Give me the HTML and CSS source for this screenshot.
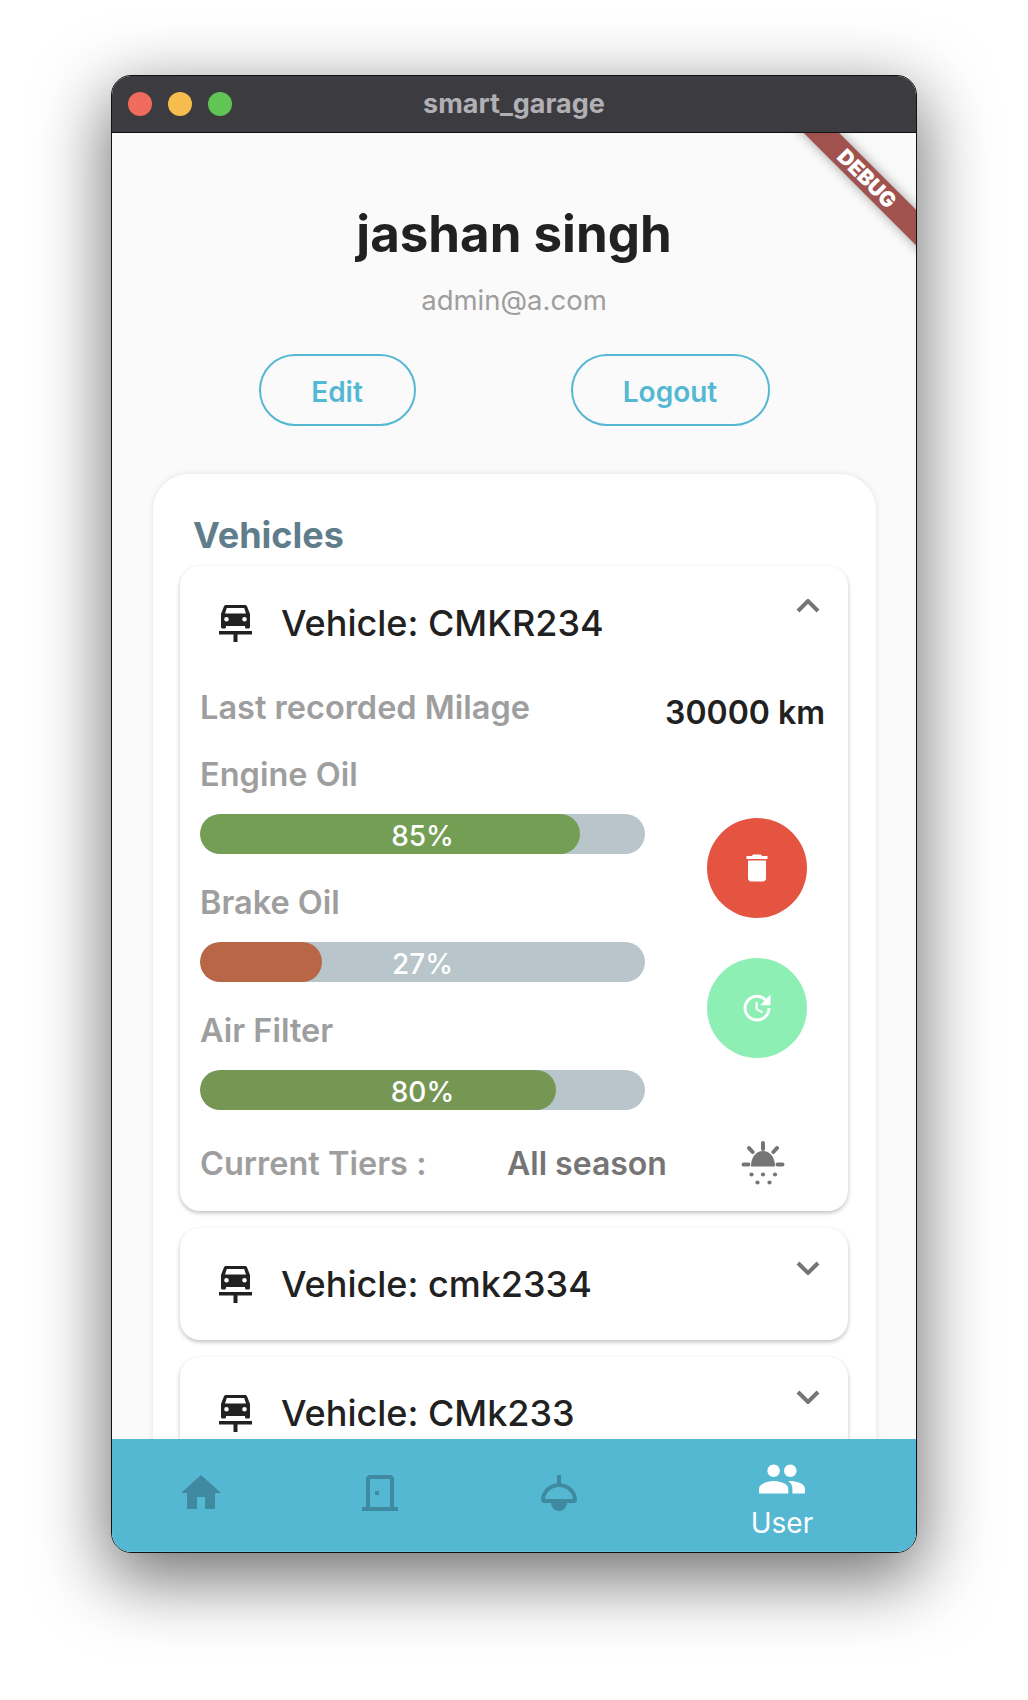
FILE: index.html
```html
<!DOCTYPE html>
<html lang="en">
  <head>
    <meta charset="UTF-8" />
    <title>smart_garage</title>
    <link rel="stylesheet" href="styles.css">
  </head>
  <body>
    <div class="window">
      <div class="titlebar">
        <div class="lights">
          <span class="light red"></span>
          <span class="light yellow"></span>
          <span class="light green"></span>
        </div>
        <div class="window-title">smart_garage</div>
      </div>

      <div class="screen">
        <div class="debug-banner">DEBUG</div>

        <div class="profile">
          <h1 class="user-name">jashan singh</h1>
          <p class="user-mail">admin@a.com</p>
          <div class="profile-actions">
            <button class="outline-btn edit-btn">Edit</button>
            <button class="outline-btn logout-btn">Logout</button>
          </div>
        </div>

        <div class="panel">
          <h2 class="panel-title">Vehicles</h2>

          <div class="vehicle-card open">
            <div class="vehicle-head">
              <svg class="car-icon" viewBox="0 0 33 38"><path d="M7 1h19c1 0 1.800.6 2.100 1.500L31 10v13c0 .8-.6 1.500-1.500 1.500h-2c-.8 0-1.500-.6-1.500-1.500v-1H7v1c0 .8-.6 1.500-1.500 1.500h-2C2.600 24.500 2 23.800 2 23V10l2.900-7.500C5.200 1.600 6 1 7 1zm.8 3L6 9.500h21L25.200 4H7.800zM7.500 13a2.300 2.300 0 1 0 0 4.600 2.300 2.300 0 0 0 0-4.600zm18 0a2.300 2.300 0 1 0 0 4.600 2.300 2.300 0 0 0 0-4.600zM0 27h33v3.500H18.500V38h-4v-7.500H0z"/></svg>
              <span class="vehicle-name">Vehicle: CMKR234</span>
              <svg class="chevron" viewBox="0 0 24 14"><path d="M2 12 12 2l10 10"/></svg>
            </div>

            <div class="vehicle-body">
              <div class="milage-row">
                <span class="muted-label">Last recorded Milage</span>
                <span class="milage-value">30000 km</span>
              </div>

              <div class="parts-row">
                <div class="parts">
                  <div class="muted-label part-label">Engine Oil</div>
                  <div class="bar">
                    <div class="bar-fill good" style="width: 85.4%"></div>
                    <span class="bar-text">85%</span>
                  </div>
                  <div class="muted-label part-label">Brake Oil</div>
                  <div class="bar">
                    <div class="bar-fill bad" style="width: 27.5%"></div>
                    <span class="bar-text">27%</span>
                  </div>
                  <div class="muted-label part-label">Air Filter</div>
                  <div class="bar">
                    <div class="bar-fill fair" style="width: 80%"></div>
                    <span class="bar-text">80%</span>
                  </div>
                </div>

                <div class="round-actions">
                  <button class="round-btn delete-btn">
                    <svg viewBox="0 0 24 24"><path d="M6 19c0 1.100.9 2 2 2h8c1.100 0 2-.9 2-2V7H6v12zM19 4h-3.500l-1-1h-5l-1 1H5v2h14V4z"/></svg>
                  </button>
                  <button class="round-btn refresh-btn">
                    <svg viewBox="0 0 24 24"><path d="M21 10.120h-6.780l2.740-2.820c-2.730-2.700-7.150-2.800-9.880-.1-2.730 2.710-2.730 7.080 0 9.790s7.150 2.710 9.880 0C18.320 15.650 19 14.080 19 12.100h2c0 1.980-.88 4.550-2.640 6.290-3.510 3.480-9.210 3.480-12.720 0-3.500-3.470-3.530-9.110-.02-12.580s9.140-3.470 12.650 0L21 3v7.120zM12.500 8v4.250l3.500 2.080-.72 1.210L11 13V8h1.500z"/></svg>
                  </button>
                </div>
              </div>

              <div class="tires-row">
                <span class="muted-label">Current Tiers :</span>
                <span class="tires-value">All season</span>
                <svg class="tires-icon" viewBox="0 0 46 44">
                  <path class="sun-dome" d="M10 25.500C10 16 15 10 22 10s12 6 12 15.500z"/>
                  <path class="sun-rays" d="M22 2v6M8 7l3.600 4M36 7l-3.600 4M2.500 23.500h5M36.500 23.500h5"/>
                  <circle cx="10.500" cy="33.500" r="2.100"/><circle cx="22" cy="33.500" r="2.100"/><circle cx="34" cy="33.500" r="2.100"/>
                  <circle cx="16.500" cy="41.500" r="2.100"/><circle cx="28.500" cy="41.500" r="2.100"/>
                </svg>
              </div>
            </div>
          </div>

          <div class="vehicle-card">
            <div class="vehicle-head">
              <svg class="car-icon" viewBox="0 0 33 38"><path d="M7 1h19c1 0 1.800.6 2.100 1.500L31 10v13c0 .8-.6 1.500-1.500 1.500h-2c-.8 0-1.500-.6-1.500-1.500v-1H7v1c0 .8-.6 1.500-1.500 1.500h-2C2.600 24.500 2 23.800 2 23V10l2.900-7.500C5.200 1.600 6 1 7 1zm.8 3L6 9.500h21L25.200 4H7.800zM7.500 13a2.300 2.300 0 1 0 0 4.600 2.300 2.300 0 0 0 0-4.600zm18 0a2.300 2.300 0 1 0 0 4.600 2.300 2.300 0 0 0 0-4.600zM0 27h33v3.500H18.500V38h-4v-7.500H0z"/></svg>
              <span class="vehicle-name">Vehicle: cmk2334</span>
              <svg class="chevron" viewBox="0 0 24 14"><path d="M2 2l10 10L22 2"/></svg>
            </div>
          </div>

          <div class="vehicle-card">
            <div class="vehicle-head">
              <svg class="car-icon" viewBox="0 0 33 38"><path d="M7 1h19c1 0 1.800.6 2.100 1.500L31 10v13c0 .8-.6 1.500-1.500 1.500h-2c-.8 0-1.500-.6-1.500-1.500v-1H7v1c0 .8-.6 1.500-1.500 1.500h-2C2.600 24.500 2 23.800 2 23V10l2.900-7.500C5.200 1.600 6 1 7 1zm.8 3L6 9.500h21L25.200 4H7.800zM7.500 13a2.300 2.300 0 1 0 0 4.600 2.300 2.300 0 0 0 0-4.600zm18 0a2.300 2.300 0 1 0 0 4.600 2.300 2.300 0 0 0 0-4.600zM0 27h33v3.500H18.500V38h-4v-7.500H0z"/></svg>
              <span class="vehicle-name">Vehicle: CMk233</span>
              <svg class="chevron" viewBox="0 0 24 14"><path d="M2 2l10 10L22 2"/></svg>
            </div>
          </div>
        </div>
      </div>

      <div class="bottom-nav">
        <div class="nav-item">
          <svg class="nav-icon" viewBox="0 0 24 24"><path d="M10 20v-6h4v6h5v-8h3L12 3 2 12h3v8z"/></svg>
        </div>
        <div class="nav-item">
          <svg class="nav-icon" viewBox="0 0 24 24"><path d="M19 19V5c0-1.100-.9-2-2-2H7c-1.100 0-2 .9-2 2v14H3v2h18v-2h-2zm-2 0H7V5h10v14zM9.500 11h2v2h-2z"/></svg>
        </div>
        <div class="nav-item">
          <svg class="nav-icon" viewBox="0 0 24 24"><path d="M11 3h2v4.100c4.500.5 8 4 8 8.400 0 1-.7 1.500-1.500 1.500H16a4 4 0 0 1-8 0H4.500C3.700 17 3 16.500 3 15.500c0-4.400 3.500-7.900 8-8.400V3zM12 9c-3.600 0-6.700 2.700-7 6h14c-.3-3.300-3.400-6-7-6z"/></svg>
        </div>
        <div class="nav-item active">
          <svg class="nav-icon" viewBox="0 0 24 24"><path d="M16 11c1.660 0 2.990-1.340 2.990-3S17.660 5 16 5c-1.660 0-3 1.340-3 3s1.340 3 3 3zm-8 0c1.660 0 2.990-1.340 2.990-3S9.660 5 8 5C6.340 5 5 6.340 5 8s1.340 3 3 3zm0 2c-2.330 0-7 1.170-7 3.500V19h14v-2.500c0-2.330-4.670-3.500-7-3.500zm8 0c-.29 0-.62.02-.97.05 1.160.84 1.970 1.970 1.970 3.450V19h6v-2.500c0-2.330-4.670-3.500-7-3.500z"/></svg>
          <span class="nav-label">User</span>
        </div>
      </div>
    </div>
  </body>
</html>
```

FILE: styles.css
```css
* {
  box-sizing: border-box;
}
html,
body {
  height: 1700px;
  overflow: hidden;
}
body {
  margin: 0;
  padding: 75px 0 0 111px;
  background-color: #fff;
  font-family: Inter, "Noto Sans", sans-serif;
}

/* window chrome */
.window {
  display: flex;
  flex-direction: column;
  width: 806px;
  height: 1478px;
  border: 1px solid #111;
  border-radius: 20px;
  overflow: hidden;
  box-shadow: 0 22px 70px 4px rgba(0, 0, 0, 0.56);
}
.titlebar {
  position: relative;
  flex: none;
  display: flex;
  align-items: center;
  justify-content: center;
  height: 57px;
  padding-bottom: 2px;
  background-color: #3c3b40;
  border-bottom: 1px solid #111;
}
.lights {
  position: absolute;
  left: 16px;
  top: 16px;
  display: flex;
  gap: 16px;
}
.light {
  width: 24px;
  height: 24px;
  border-radius: 50%;
}
.light.red {
  background-color: #f16a5e;
}
.light.yellow {
  background-color: #f6bd4e;
}
.light.green {
  background-color: #5fc655;
}
.window-title {
  font-size: 27px;
  font-weight: 700;
  color: #b1b0b5;
}

/* main screen */
.screen {
  position: relative;
  flex: 1;
  min-height: 0;
  overflow: hidden;
  background-color: #fafafa;
}
.debug-banner {
  position: absolute;
  top: 33px;
  right: -71px;
  width: 240px;
  height: 25px;
  line-height: 25px;
  text-align: center;
  font-size: 21px;
  font-weight: 900;
  color: #fff;
  background-color: #a0524f;
  box-shadow: 0 0 12px rgba(0, 0, 0, 0.35);
  transform: rotate(45deg);
  z-index: 2;
}
.profile {
  display: flex;
  flex-direction: column;
  align-items: center;
  padding-top: 61px;
}
.user-name {
  margin: 0;
  font-size: 51px;
  line-height: 80px;
  font-weight: 700;
  color: #212121;
}
.user-mail {
  margin: 6px 0 0;
  font-size: 27.5px;
  line-height: 40px;
  color: #9e9e9e;
}
.profile-actions {
  display: flex;
  justify-content: center;
  gap: 155px;
  margin-top: 34px;
}
.outline-btn {
  height: 72px;
  padding: 3px 0 0;
  background: none;
  border: 2px solid #55b8d2;
  border-radius: 36px;
  font-family: inherit;
  font-size: 28px;
  font-weight: 600;
  color: #55b8d2;
}
.edit-btn {
  width: 157px;
}
.logout-btn {
  width: 199px;
}

.panel {
  margin: 48px 40px 0 41px;
  padding: 36px 28px 40px 27px;
  background-color: #fff;
  border-radius: 36px;
  box-shadow: 0 0 6px rgba(0, 0, 0, 0.1);
}
.panel-title {
  margin: 0 0 0 13px;
  font-size: 36px;
  line-height: 50px;
  font-weight: 700;
  color: #607d8b;
}
.vehicle-card {
  margin-top: 17px;
  background-color: #fff;
  border-radius: 20px;
  box-shadow: 0 2px 4px rgba(0, 0, 0, 0.25);
}
.panel-title + .vehicle-card {
  margin-top: 6px;
}
.vehicle-head {
  display: flex;
  align-items: center;
  height: 112px;
  padding: 0 28px 0 39px;
}
.open .vehicle-head {
  height: 113px;
}
.car-icon {
  flex: none;
  width: 33px;
  height: 38px;
  fill: #212121;
}
.vehicle-name {
  flex: 1;
  margin-left: 29px;
  font-size: 36px;
  font-weight: 500;
  color: #212121;
}
.chevron {
  flex: none;
  width: 24px;
  height: 14px;
  margin-bottom: 33px;
  fill: none;
  stroke: #757575;
  stroke-width: 4;
}
.vehicle-body {
  padding: 3px 23px 0 20px;
}
.muted-label {
  font-size: 32.500px;
  font-weight: 600;
  color: #9e9e9e;
}
.milage-row {
  display: flex;
  justify-content: space-between;
  align-items: center;
  height: 50px;
}
.milage-value {
  margin-top: 10px;
  font-size: 32px;
  font-weight: 600;
  color: #212121;
}
.parts-row {
  display: flex;
}
.parts {
  width: 445px;
}
.part-label {
  margin-top: 24px;
  line-height: 50px;
  margin-bottom: 14px;
}
.part-label:first-child {
  margin-top: 18px;
}
.bar {
  position: relative;
  height: 40px;
  overflow: hidden;
  background-color: #b8c5ca;
  border-radius: 20px;
  text-align: center;
}
.bar-fill {
  position: absolute;
  left: 0;
  top: 0;
  bottom: 0;
  border-radius: 20px;
}
.bar-fill.good {
  background-color: #739e54;
}
.bar-fill.fair {
  background-color: #769753;
}
.bar-fill.bad {
  background-color: #b96647;
}
.bar-text {
  position: relative;
  font-size: 28px;
  line-height: 44px;
  font-weight: 500;
  color: #fff;
}
.round-actions {
  display: flex;
  flex-direction: column;
  gap: 40px;
  margin: 86px 0 0 62px;
}
.round-btn {
  display: flex;
  align-items: center;
  justify-content: center;
  width: 100px;
  height: 100px;
  padding: 0;
  border: none;
  border-radius: 50%;
}
.round-btn svg {
  width: 36px;
  height: 36px;
  fill: #fff;
}
.delete-btn {
  background-color: #e45441;
}
.refresh-btn {
  background-color: #8eefb5;
}
.tires-row {
  display: flex;
  align-items: center;
  height: 101px;
  padding-top: 5px;
}
.tires-row .muted-label {
  width: 307px;
}
.tires-value {
  width: 234px;
  font-size: 32px;
  font-weight: 600;
  color: #757575;
}
.tires-icon {
  width: 46px;
  height: 44px;
  fill: #757575;
}
.sun-rays {
  fill: none;
  stroke: #757575;
  stroke-width: 4;
  stroke-linecap: round;
}

/* bottom navigation */
.bottom-nav {
  flex: none;
  display: grid;
  grid-template-columns: 2fr 2fr 2fr 3fr;
  height: 113px;
  background-color: #55b8d2;
  border-bottom: 1px solid #66bfd6;
}
.nav-item {
  display: flex;
  flex-direction: column;
  align-items: center;
  justify-content: center;
  padding-bottom: 5px;
}
.nav-icon {
  width: 48px;
  height: 48px;
  fill: #3f8aa0;
}
.nav-item.active {
  justify-content: flex-start;
  padding: 15px 0 0;
}
.active .nav-icon {
  width: 50px;
  height: 50px;
  fill: #fff;
}
.nav-label {
  margin-top: 2px;
  font-size: 28px;
  line-height: 34px;
  color: #fff;
}
```
